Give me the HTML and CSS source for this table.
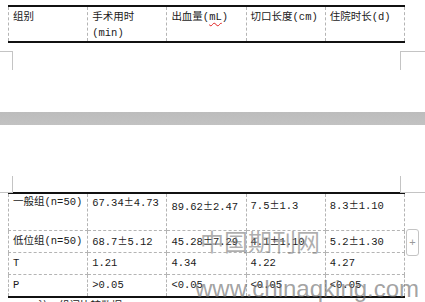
FILE: index.html
```html
<!DOCTYPE html>
<html lang="zh">
<head>
<meta charset="utf-8">
<title>表格</title>
<link rel="stylesheet" href="styles.css">
</head>
<body>
<div class="screen">
  <section class="page page-end">
    <table class="grid head">
      <tr>
        <td>组别</td>
        <td>手术用时<br>(min)</td>
        <td>出血量(<span class="spell">mL</span>)</td>
        <td>切口长度(cm)</td>
        <td>住院时长(d)</td>
      </tr>
    </table>
    <div class="marks marks-top"><span class="mark mark-l"></span><span class="mark mark-r"></span></div>
  </section>
  <div class="gap"></div>
  <section class="page page-start">
    <div class="marks marks-bottom"><span class="mark mark-l"></span><span class="mark mark-r"></span></div>
    <table class="grid body">
      <tr class="r1">
        <td>一般组(n=50)</td>
        <td>67.34<span class="pm">±</span>4.73</td>
        <td class="lo3">89.62<span class="pm">±</span>2.47</td>
        <td class="lo2">7.5<span class="pm">±</span>1.3</td>
        <td class="lo2">8.3<span class="pm">±</span>1.10</td>
      </tr>
      <tr class="rn">
        <td>低位组(n=50)</td>
        <td>68.7<span class="pm">±</span>5.12</td>
        <td>45.28<span class="pm">±</span>7.29</td>
        <td>4.1<span class="pm">±</span>1.10</td>
        <td>5.2<span class="pm">±</span>1.30</td>
      </tr>
      <tr class="rn">
        <td>T</td>
        <td>1.21</td>
        <td>4.34</td>
        <td>4.22</td>
        <td>4.27</td>
      </tr>
      <tr class="rn">
        <td>P</td>
        <td>&gt;0.05</td>
        <td>&lt;0.05</td>
        <td>&lt;0.05</td>
        <td>&lt;0.05</td>
      </tr>
    </table>
    <p class="note">注：组间比较数据</p>
  </section>
  <div class="handle">+</div>
  <div class="wm wm-cn">中国期刊网</div>
  <div class="wm wm-url">www.chinaqking.com</div>
</div>
</body>
</html>
```

FILE: styles.css
```css
html, body {
  margin: 0;
  padding: 0;
  overflow: hidden;
  background: #fff;
}

.screen {
  position: relative;
  width: 425px;
  height: 302px;
  overflow: hidden;
  font-family: "Liberation Mono", "Noto Sans CJK SC", monospace;
  font-size: 10.5px;
  color: #1a1a1a;
}

.page {
  box-sizing: border-box;
}

.page-end {
  height: 112px;
  padding-top: 5px;
}

.grid {
  border-collapse: collapse;
  table-layout: fixed;
  margin-left: 8px;
  width: 397px;
}

.grid td {
  border: 1px dashed #b4b4b4;
  padding: 0 0 0 4px;
  vertical-align: top;
  white-space: nowrap;
  line-height: 14px;
}

.grid tr:first-child td {
  border-top: 2px solid #111;
}

.grid tr:last-child td {
  border-bottom: 2px solid #111;
}

.head td {
  height: 27px;
  padding-top: 2px;
  line-height: 16px;
}

.pm {
  font-family: "Noto Sans CJK SC", sans-serif;
  font-size: 10px;
}

.spell {
  text-decoration: underline wavy #e02020;
  text-decoration-thickness: 1px;
  text-underline-offset: 2px;
}

.marks {
  display: flex;
  justify-content: space-between;
}

.mark {
  display: block;
  box-sizing: border-box;
  border-color: #c4c4c4;
  border-style: solid;
  border-width: 0;
}

.marks-top {
  margin-top: 8px;
}

.marks-top .mark {
  height: 19px;
  border-top-width: 1px;
}

.marks-top .mark-l {
  width: 13px;
  border-right-width: 1px;
}

.marks-top .mark-r {
  width: 25px;
  border-left-width: 1px;
}

.gap {
  height: 13px;
  background: linear-gradient(#bcbcbc, #c2c2c2);
}

.marks-bottom {
  margin-top: 51px;
}

.marks-bottom .mark {
  height: 17px;
  border-bottom-width: 1px;
}

.marks-bottom .mark-l {
  width: 13px;
  border-right-width: 1px;
}

.marks-bottom .mark-r {
  width: 25px;
  border-left-width: 1px;
}

.body {
  margin-top: -1px;
}

.body .r1 td {
  height: 35px;
  padding-top: 1px;
}

.body .r1 td.lo3 {
  padding-top: 5px;
  height: 31px;
}

.body .r1 td.lo2 {
  padding-top: 4px;
  height: 32px;
}

.body .rn td {
  height: 18px;
  padding-top: 3px;
}

.note {
  margin: 1px 0 0 38px;
  line-height: 14px;
  font-size: 10.5px;
}

.handle {
  position: absolute;
  left: 406px;
  top: 229px;
  width: 13px;
  height: 27px;
  box-sizing: border-box;
  border: 1px solid #c4c4c4;
  border-radius: 3px;
  background: #fff;
  color: #9a9a9a;
  font-family: "Liberation Sans", sans-serif;
  font-size: 11px;
  line-height: 25px;
  text-align: center;
}

.wm {
  position: absolute;
  white-space: nowrap;
  pointer-events: none;
}

.wm-cn {
  left: 200px;
  top: 229px;
  font-family: "Noto Sans CJK SC", sans-serif;
  font-size: 24px;
  line-height: 24px;
  color: rgba(120, 120, 120, 0.6);
}

.wm-url {
  left: 195px;
  top: 277px;
  font-family: "Liberation Sans", sans-serif;
  font-size: 24px;
  line-height: 24px;
  color: rgba(110, 110, 110, 0.65);
}
```
